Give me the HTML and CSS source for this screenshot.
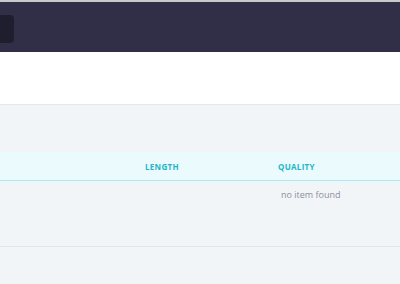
FILE: index.html
```html
<!DOCTYPE html>
<html lang="en">

<head>
  <meta charset="UTF-8">
  <title>Items</title>
  <link rel="stylesheet" href="styles.css">
</head>

<body>
  <header class="topbar">
    <div class="brand"></div>
  </header>
  <section class="toolbar"></section>
  <main class="content">
    <table class="items">
      <thead>
        <tr>
          <th class="col-name"></th>
          <th class="col-length">Length</th>
          <th class="col-quality">Quality</th>
          <th class="col-rest"></th>
        </tr>
      </thead>
      <tbody>
        <tr>
          <td></td>
          <td></td>
          <td class="empty">no item found</td>
          <td></td>
        </tr>
      </tbody>
    </table>
    <div class="divider"></div>
  </main>
</body>

</html>
```

FILE: styles.css
```css
body {
  margin: 0;
  font-family: "Open Sans", sans-serif;
  background-color: #f2f5f8;
  height: 284px;
  overflow: hidden;
}

.topbar {
  border-top: 2px solid #c9c9cc;
  background-color: #312f48;
  height: 50px;
  display: flex;
  align-items: center;
}

.brand {
  width: 14px;
  height: 28px;
  margin-top: 4px;
  background-color: #1f1e2f;
  border-radius: 0 4px 4px 0;
}

.toolbar {
  background-color: #fff;
  height: 52px;
  border-bottom: 1px solid #e3e8ec;
}

.content {
  padding-top: 47px;
}

.items {
  width: 100%;
  border-collapse: collapse;
}

.items thead tr {
  background-color: #ebfafc;
  border-bottom: 1px solid #a9e9f1;
}

.items th {
  height: 28px;
  padding: 0;
  text-align: left;
  font-size: 8px;
  font-weight: 700;
  letter-spacing: 0.3px;
  text-transform: uppercase;
  color: #22b6ca;
}

.col-name {
  width: 145px;
}

.col-length {
  width: 133px;
}

.col-quality {
  width: 90px;
}

.items td {
  padding: 0;
  height: 28px;
  vertical-align: top;
}

.empty {
  padding-top: 7px !important;
  padding-left: 3px !important;
  font-size: 9px;
  color: #8b909a;
  white-space: nowrap;
}

.divider {
  margin-top: 30px;
  border-top: 1px solid #e1e6ea;
}
```
